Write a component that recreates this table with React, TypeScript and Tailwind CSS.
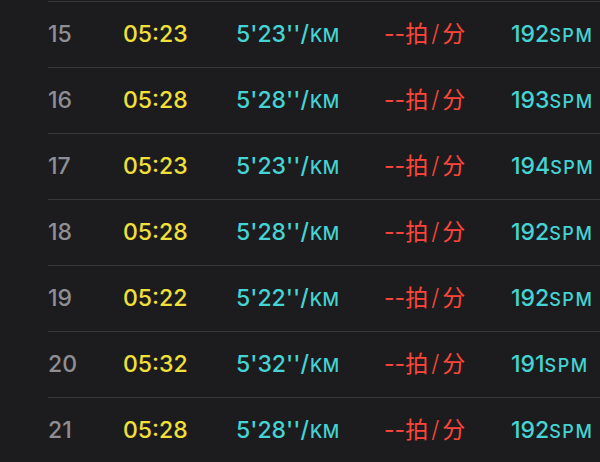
import React from "react";

const rows = [
  { n: 15, time: "05:23", pace: "5'23''", spm: 192 },
  { n: 16, time: "05:28", pace: "5'28''", spm: 193 },
  { n: 17, time: "05:23", pace: "5'23''", spm: 194 },
  { n: 18, time: "05:28", pace: "5'28''", spm: 192 },
  { n: 19, time: "05:22", pace: "5'22''", spm: 192 },
  { n: 20, time: "05:32", pace: "5'32''", spm: 191 },
  { n: 21, time: "05:28", pace: "5'28''", spm: 192 },
];

export default function App() {
  return (
    <div
      className="w-[600px] h-[462px] overflow-hidden bg-[#1c1c1e] pl-12 pt-px"
      style={{ fontFamily: 'Inter, "Noto Sans CJK SC", sans-serif' }}
    >
      {rows.map((r) => (
        <div
          key={r.n}
          className="grid h-[66px] grid-cols-[75px_113px_148px_127px_1fr] items-center border-t border-[#38383a] text-[23px] leading-none font-medium"
        >
          <span className="text-[#8e8e93]">{r.n}</span>
          <span className="text-[#f2e03a]">{r.time}</span>
          <span className="text-[#45d3d3]">
            {r.pace}/<span className="ml-px text-[18px] tracking-[0.5px]">KM</span>
          </span>
          <span className="text-[#ff453a] font-normal">
            --拍<span className="px-[3px] font-light">/</span>分
          </span>
          <span className="text-[#45d3d3]">
            {r.spm}
            <span className="text-[18px] tracking-[1.5px]">SPM</span>
          </span>
        </div>
      ))}
    </div>
  );
}
